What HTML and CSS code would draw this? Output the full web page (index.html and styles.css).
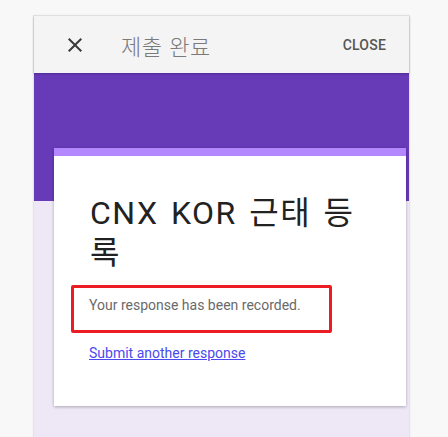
FILE: index.html
```html
<!DOCTYPE html>
<html lang="ko">
<head>
<meta charset="utf-8">
<title>제출 완료</title>
<link rel="stylesheet" href="styles.css">
</head>
<body>
<div class="panel">
  <header class="topbar">
    <svg class="close-icon" viewBox="0 0 24 24" width="24" height="24" aria-hidden="true">
      <path d="M19 6.41L17.59 5 12 10.59 6.41 5 5 6.41 10.59 12 5 17.59 6.41 19 12 13.41 17.59 19 19 17.59 13.41 12z"/>
    </svg>
    <h1 class="topbar-title">제출 완료</h1>
    <span class="close-btn">CLOSE</span>
  </header>
  <main class="content">
    <section class="card">
      <div class="card-stripe"></div>
      <div class="card-body">
        <h2 class="form-title">CNX KOR 근태 등록</h2>
        <div class="response-note">Your response has been recorded.</div>
        <a class="another-link" href="#">Submit another response</a>
      </div>
    </section>
  </main>
</div>
</body>
</html>
```
FILE: styles.css
```css
html, body {
  margin: 0;
  padding: 0;
  height: 100%;
  overflow: hidden;
}
body {
  background: #f8f8f8;
  font-family: Roboto, "Noto Sans CJK KR", sans-serif;
}
.panel {
  margin: 15px 0 0 33px;
  width: 375px;
  height: 480px;
  border: 1px solid #e4e4e4;
  border-bottom: none;
  background: #ede7f6;
  box-shadow: 0 0 2px rgba(0,0,0,0.06);
  display: flex;
  flex-direction: column;
}
.topbar {
  height: 57px;
  background: #f4f4f4;
  display: flex;
  align-items: center;
  padding: 0 23px 0 29px;
  position: relative;
  z-index: 1;
  box-shadow: 0 1px 2px rgba(40,20,80,0.35);
}
.close-icon {
  fill: #3a3a3a;
  flex: none;
}
.topbar-title {
  margin: 0 0 0 34px;
  flex: 1;
  font-family: "Noto Sans CJK KR", sans-serif;
  font-size: 22px;
  font-weight: 300;
  color: #7a7a7a;
  letter-spacing: 0.5px;
}
.close-btn {
  font-size: 14px;
  font-weight: 500;
  color: #555555;
  letter-spacing: 0.2px;
}
.content {
  flex: 1;
  background: linear-gradient(#673ab7 0, #673ab7 128px, #ede7f6 128px);
  padding: 75px 0 0 20px;
}
.card {
  width: 352px;
  background: #ffffff;
  box-shadow: 0 1px 3px rgba(0,0,0,0.28);
}
.card-stripe {
  height: 8px;
  background: #b388ff;
}
.card-body {
  padding: 37px 35px 43px 35px;
}
.form-title {
  margin: 0;
  font-size: 32px;
  line-height: 40px;
  font-weight: 400;
  color: #222222;
  padding-left: 1px;
  letter-spacing: 1.5px;
  word-spacing: 3px;
}
.response-note {
  margin: 12px 0 0 -18px;
  width: 240px;
  border: 3px solid #ec1c24;
  border-radius: 2px;
  padding: 7px 0 15px 15px;
  font-size: 14px;
  line-height: 20px;
  color: #6a6a6a;
}
.another-link {
  display: inline-block;
  margin-top: 10px;
  font-size: 14px;
  line-height: 20px;
  color: #4a4af0;
  text-decoration: underline;
}
```
